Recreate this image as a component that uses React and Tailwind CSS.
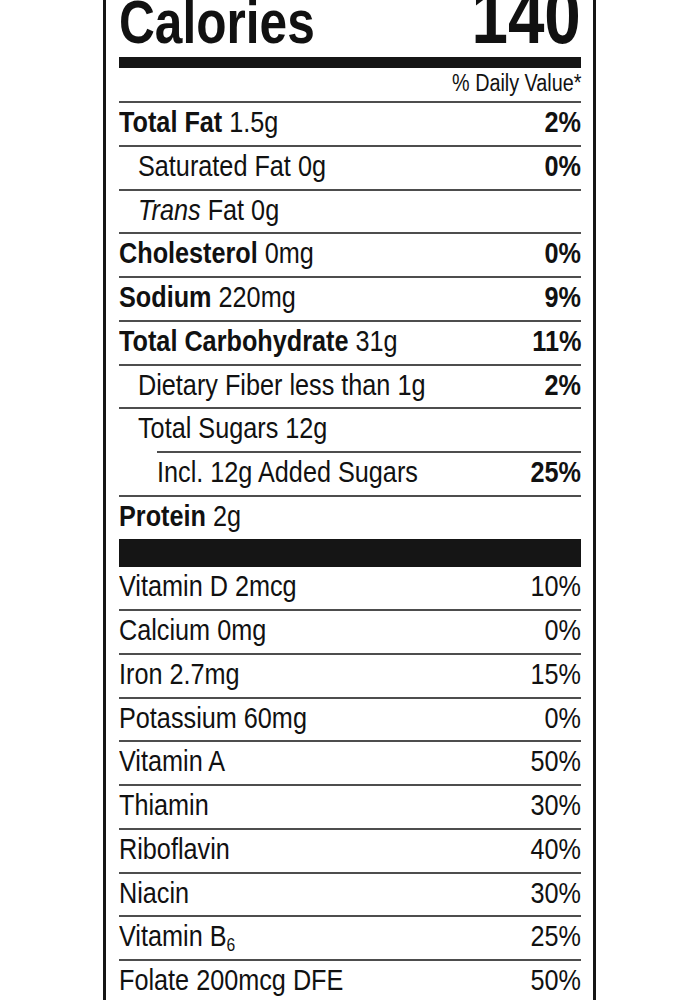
import React from 'react';

// Etiqueta nutricional (recorte): linhas de nutrientes com % do valor diário.
// Sem fonte condensada instalada: o texto é comprimido na horizontal (scale-x).
const FONT = "font-['Liberation_Sans',Arial,sans-serif]";

function Row({ label, value, pct, indent = 0, bold = false, pctBold = true, border = true, lineIndent = false, h = 'h-[43.75px]' }) {
  return (
    <div
      className={[
        'flex justify-between pt-[5px] leading-none text-[29px]',
        h,
        border ? 'border-t-2 border-[#4d4d4d]' : '',
        lineIndent ? 'ml-[38px]' : '',
      ].join(' ')}
    >
      <div className={indent === 1 ? 'pl-[19px]' : ''}>
        <span className="inline-block origin-left scale-x-[0.87] whitespace-nowrap">
          {bold ? <span className="font-bold">{label}</span> : label}
          {value && <span> {value}</span>}
        </span>
      </div>
      {pct && (
        <span className={`inline-block origin-right scale-x-[0.87] ${pctBold ? 'font-bold' : ''}`}>{pct}</span>
      )}
    </div>
  );
}

export default function App() {
  return (
    <div className={`min-h-[1000px] bg-white text-[#111] ${FONT}`}>
      <div className="ml-[103px] w-[493px] h-[1000px] overflow-hidden border-x-[3px] border-[#161616] pl-[13px] pr-[12px]">
        {/* Calorias — o topo fica cortado como na imagem */}
        <div className="-mt-[24px] flex items-baseline justify-between font-bold">
          <span className="inline-block origin-left scale-x-[0.8] text-[62px] leading-none">Calories</span>
          <span className="inline-block origin-right scale-x-[0.83] text-[79px] leading-none">140</span>
        </div>
        <div className="mt-[2px] h-[11px] bg-[#151515]" />
        <div className="h-[33px] pt-[4px] text-right text-[23px] leading-none">
          <span className="inline-block origin-right scale-x-[0.86]">% Daily Value*</span>
        </div>

        <Row label="Total Fat" value="1.5g" pct="2%" bold />
        <Row label="Saturated Fat 0g" pct="0%" indent={1} />
        <Row label={<><i>Trans</i> Fat 0g</>} indent={1} />
        <Row label="Cholesterol" value="0mg" pct="0%" bold />
        <Row label="Sodium" value="220mg" pct="9%" bold />
        <Row label="Total Carbohydrate" value="31g" pct="11%" bold />
        <Row label="Dietary Fiber less than 1g" pct="2%" indent={1} />
        <Row label="Total Sugars 12g" indent={1} />
        <Row label="Incl. 12g Added Sugars" pct="25%" lineIndent />
        <Row label="Protein" value="2g" bold />

        <div className="h-[28px] bg-[#151515]" />

        <Row label="Vitamin D 2mcg" pct="10%" pctBold={false} border={false} h="h-[42.5px]" />
        <Row label="Calcium 0mg" pct="0%" pctBold={false} />
        <Row label="Iron 2.7mg" pct="15%" pctBold={false} />
        <Row label="Potassium 60mg" pct="0%" pctBold={false} />
        <Row label="Vitamin A" pct="50%" pctBold={false} />
        <Row label="Thiamin" pct="30%" pctBold={false} />
        <Row label="Riboflavin" pct="40%" pctBold={false} />
        <Row label="Niacin" pct="30%" pctBold={false} />
        <Row
          label={<>Vitamin B<span className="relative top-[5px] text-[18px]">6</span></>}
          pct="25%"
          pctBold={false}
        />
        <Row label="Folate 200mcg DFE" pct="50%" pctBold={false} />
      </div>
    </div>
  );
}
